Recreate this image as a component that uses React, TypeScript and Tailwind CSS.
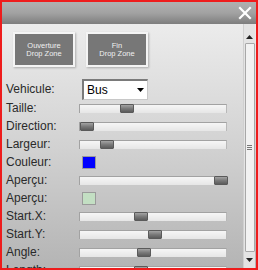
import React from 'react';

type Row =
  | { label: string; kind: 'slider'; pos: number }
  | { label: string; kind: 'swatch'; color: string };

const rows: Row[] = [
  { label: 'Taille:', kind: 'slider', pos: 40 },
  { label: 'Direction:', kind: 'slider', pos: 0 },
  { label: 'Largeur:', kind: 'slider', pos: 20 },
  { label: 'Couleur:', kind: 'swatch', color: '#0000ff' },
  { label: 'Aperçu:', kind: 'slider', pos: 134 },
  { label: 'Aperçu:', kind: 'swatch', color: '#c3dfc3' },
  { label: 'Start.X:', kind: 'slider', pos: 54 },
  { label: 'Start.Y:', kind: 'slider', pos: 68 },
  { label: 'Angle:', kind: 'slider', pos: 57 },
  { label: 'Length:', kind: 'slider', pos: 54 },
];

const Slider: React.FC<{ pos: number }> = ({ pos }) => (
  <div className="relative w-[148px] h-[9px] border-t border-l border-[#a2a2a2] border-r border-r-[#b8b8b8] bg-gradient-to-b from-[#f6f6f6] to-[#e6e6e6]">
    <div
      className="absolute top-[-1px] w-[14px] h-[9px] rounded-[1px] border border-[#5a5a5a] bg-gradient-to-b from-[#a4a4a4] via-[#7a7a7a] to-[#5c5c5c]"
      style={{ left: pos }}
    />
  </div>
);

const DropButton: React.FC<{ lines: string[] }> = ({ lines }) => (
  <button className="w-[62px] h-[35px] shrink-0 bg-[#777777] border-2 border-[#f4f4f4] shadow-[1px_1px_2px_rgba(0,0,0,0.25)] flex flex-col items-center justify-center text-[7.5px] leading-[8px] text-[#f0f0f0]">
    {lines.map((l) => (
      <span key={l}>{l}</span>
    ))}
  </button>
);

export default function App() {
  return (
    <div
      className="w-[258px] h-[270px] border-2 border-[#ee1c1c] flex flex-col overflow-hidden"
      style={{ fontFamily: '"Liberation Sans", Arial, sans-serif' }}
    >
      {/* title bar */}
      <div className="h-[22px] shrink-0 flex justify-end items-center pr-[4px] bg-gradient-to-b from-[#b0b0b0] via-[#a2a2a2] to-[#7e7e7e]">
        <svg width="14" height="14" viewBox="0 0 14 14">
          <path d="M2 2 L12 12 M12 2 L2 12" stroke="#ffffff" strokeWidth="2.2" strokeLinecap="square" />
        </svg>
      </div>

      <div className="flex-1 min-h-0 flex overflow-hidden bg-gradient-to-b from-[#ececec] via-[#d2d2d2] to-[#b4b4b4]">
        {/* content */}
        <div className="flex-1 flex flex-col text-[12px] text-[#2a2a2a]">
          <div className="h-[55px] shrink-0 flex items-start gap-[11px] pl-[11px] pt-[8px]">
            <DropButton lines={['Ouverture', 'Drop Zone']} />
            <DropButton lines={['Fin', 'Drop Zone']} />
          </div>

          <div className="h-[20px] shrink-0 flex items-center pl-[4px]">
            <span className="w-[76px]">Vehicule:</span>
            <div className="w-[66px] h-[21px] bg-white border-t-2 border-l-2 border-[#7a7a7a] border-r border-b border-r-[#c8c8c8] border-b-[#c8c8c8] flex items-center justify-between pl-[3px] pr-[3px]">
              <span className="text-[12px] text-black">Bus</span>
              <svg width="7" height="4" viewBox="0 0 7 4">
                <path d="M0 0 H7 L3.5 4 Z" fill="#000" />
              </svg>
            </div>
          </div>

          {rows.map((r, i) => (
            <div key={i} className="h-[18px] flex items-center pl-[4px] shrink-0">
              <span className="w-[73px]">{r.label}</span>
              {r.kind === 'slider' ? (
                <Slider pos={r.pos} />
              ) : (
                <div
                  className="ml-[3px] w-[14px] h-[13px] border border-[#9a9a9a]"
                  style={{ backgroundColor: r.color }}
                />
              )}
            </div>
          ))}
        </div>

        {/* scrollbar */}
        <div className="w-[12px] mr-[1px] shrink-0 flex flex-col items-center bg-[#e4e4e4] border-l border-[#d0d0d0]">
          <div className="h-[19px] shrink-0 flex items-end justify-center pb-[4px]">
            <svg width="7" height="4" viewBox="0 0 7 4">
              <path d="M0 4 H7 L3.5 0 Z" fill="#222" />
            </svg>
          </div>
          <div className="flex-1 w-[10px] bg-[#f2f2f2] border border-[#a8a8a8] rounded-[1px] flex items-center justify-center">
            <div className="flex flex-col gap-[1px]">
              <div className="w-[5px] h-[1px] bg-[#777]" />
              <div className="w-[5px] h-[1px] bg-[#777]" />
              <div className="w-[5px] h-[1px] bg-[#777]" />
            </div>
          </div>
          <div className="h-[16px] shrink-0 flex items-center justify-center">
            <svg width="7" height="4" viewBox="0 0 7 4">
              <path d="M0 0 H7 L3.5 4 Z" fill="#222" />
            </svg>
          </div>
        </div>
      </div>
    </div>
  );
}
